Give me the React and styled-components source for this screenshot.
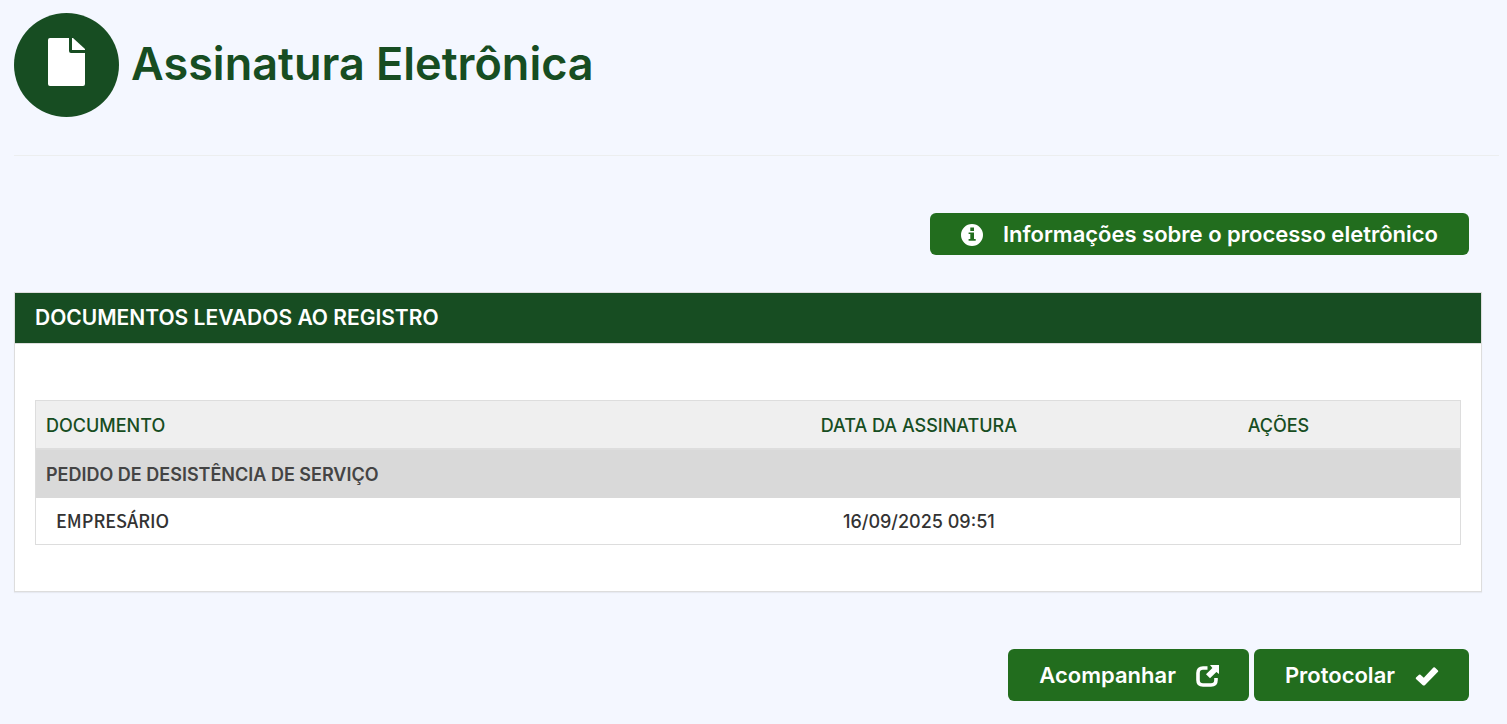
import styled, { createGlobalStyle } from 'styled-components';

const GlobalStyle = createGlobalStyle`
  * { box-sizing: border-box; }

  body {
    margin: 0;
    background: #f4f7ff;
    color: #333;
    font-family: Inter, sans-serif;
    font-size: 18px;
    font-weight: 500;
  }
`;

const Page = styled.div`
  padding: 13px 8px 23px 14px;
`;

const Header = styled.header`
  display: flex;
  align-items: center;
  gap: 12px;
  padding-bottom: 38px;
  border-bottom: 1px solid #eceeef;
`;

const Badge = styled.span`
  display: flex;
  align-items: center;
  justify-content: center;
  width: 105px;
  height: 104px;
  padding-bottom: 6px;
  border-radius: 50%;
  background: #174d22;
  color: #fff;
`;

const Title = styled.h1`
  margin: 0;
  padding-bottom: 2px;
  color: #174d22;
  font-size: 45px;
  font-weight: 600;
  line-height: 56px;
`;

const Actions = styled.div`
  display: flex;
  justify-content: flex-end;
  gap: 5px;
  margin-top: 57px;
  padding-right: 30px;
`;

const Button = styled.button`
  display: flex;
  align-items: center;
  gap: 20px;
  height: ${({ $compact }) => ($compact ? '42px' : '52px')};
  padding: 0 31px;
  border: 0;
  border-radius: 6px;
  background: #226d1e;
  color: #fff;
  font-family: inherit;
  font-size: 22px;
  font-weight: 600;
  cursor: pointer;
`;

const Icon = styled.svg`
  flex: none;
  margin-top: 2px;
  overflow: visible;
`;

const Panel = styled.section`
  margin: 37px 17px 0 0;
  border: 1px solid #ddd;
  background: #fff;
  box-shadow: 0 1px 1px rgba(0, 0, 0, 0.05);
`;

const PanelTitle = styled.h2`
  margin: 0;
  padding: 0 20px;
  border-bottom: 1px solid #ddd;
  background: #174d22;
  background-clip: padding-box;
  color: #fff;
  font-size: 21px;
  font-weight: 600;
  line-height: 50px;
`;

const PanelBody = styled.div`
  padding: 56px 20px 46px;
`;

const Table = styled.table`
  width: 100%;
  border: 1px solid #ddd;
  border-spacing: 0;
  table-layout: fixed;
`;

const Col = styled.col`
  width: ${({ $width }) => $width};
`;

const HeadCell = styled.th`
  height: 48px;
  padding: 2px 10px 0;
  border-bottom: 1px solid #ddd;
  background: #efefef;
  color: #174d22;
  font-weight: 500;
  text-align: ${({ $align }) => $align || 'center'};
`;

const GroupCell = styled.th`
  height: 49px;
  padding: 0 10px;
  border-top: 1px solid #ddd;
  background: #d9d9d9;
  color: #444;
  font-weight: 600;
  text-align: left;
`;

const Cell = styled.td`
  height: 46px;
  padding: 0 10px;
  text-align: center;
`;

const NameCell = styled(Cell)`
  padding: 0 20px 2px;
  color: #333;
  font-family: 'Noto Sans CJK SC', sans-serif;
  text-align: left;
`;

function FileIcon() {
  return (
    <svg width="37" height="48" viewBox="0 0 37 48" fill="currentColor" aria-hidden="true">
      <path d="M2 0H21V13Q21 15 23 15H37V46Q37 48 35 48H2Q0 48 0 46V2Q0 0 2 0Z" />
      <path d="M24 0H25L37 11V12H24Z" />
    </svg>
  );
}

function InfoIcon() {
  return (
    <Icon width="22" height="22" viewBox="0 0 22 22" fill="currentColor" aria-hidden="true">
      <path
        fillRule="evenodd"
        d="M11 0A11 11 0 1 1 11 22A11 11 0 1 1 11 0ZM9.3 3.6V7H13V3.6ZM7.6 8.6V10H9.3V15H7.6V16.8H14.7V15H13V8.6Z"
      />
    </Icon>
  );
}

function ShareIcon() {
  return (
    <Icon width="22" height="22" viewBox="0 0 22 22" fill="none" aria-hidden="true">
      <path
        d="M11.5 3H7Q2 3 2 8V15Q2 20 7 20H15Q20 20 20 15V13"
        stroke="currentColor"
        strokeWidth="3.6"
      />
      <path d="M14 0H23V9L20.4 7L14 13.2L10 9.2L16.4 3Z" fill="currentColor" />
    </Icon>
  );
}

function CheckIcon() {
  return (
    <Icon width="23" height="22" viewBox="0 0 23 22" fill="currentColor" aria-hidden="true">
      <path d="M1 12.6L4 9.8Q4.8 9.2 5.5 9.8L8.8 12.8L18.4 2.6Q19.2 2 19.9 2.6L23 5.4Q23.6 6.1 23 6.8L9.8 20.2Q8.8 21 7.8 20.2L1 14Q.4 13.3 1 12.6Z" />
    </Icon>
  );
}

const groups = [
  {
    title: 'PEDIDO DE DESISTÊNCIA DE SERVIÇO',
    signatures: [{ name: 'EMPRESÁRIO', date: '16/09/2025 09:51' }],
  },
];

export default function App() {
  return (
    <>
      <GlobalStyle />
      <Page>
        <Header>
          <Badge>
            <FileIcon />
          </Badge>
          <Title>Assinatura Eletrônica</Title>
        </Header>

        <Actions>
          <Button type="button" $compact>
            <InfoIcon />
            Informações sobre o processo eletrônico
          </Button>
        </Actions>

        <Panel>
          <PanelTitle>DOCUMENTOS LEVADOS AO REGISTRO</PanelTitle>
          <PanelBody>
            <Table>
              <colgroup>
                <Col $width="49.5%" />
                <Col $width="25%" />
                <Col />
              </colgroup>
              <thead>
                <tr>
                  <HeadCell scope="col" $align="left">DOCUMENTO</HeadCell>
                  <HeadCell scope="col">DATA DA ASSINATURA</HeadCell>
                  <HeadCell scope="col">AÇÕES</HeadCell>
                </tr>
              </thead>
              {groups.map((group) => (
                <tbody key={group.title}>
                  <tr>
                    <GroupCell scope="rowgroup" colSpan={3}>{group.title}</GroupCell>
                  </tr>
                  {group.signatures.map((s) => (
                    <tr key={s.name}>
                      <NameCell>{s.name}</NameCell>
                      <Cell>{s.date}</Cell>
                      <Cell />
                    </tr>
                  ))}
                </tbody>
              ))}
            </Table>
          </PanelBody>
        </Panel>

        <Actions>
          <Button type="button">
            Acompanhar
            <ShareIcon />
          </Button>
          <Button type="button">
            Protocolar
            <CheckIcon />
          </Button>
        </Actions>
      </Page>
    </>
  );
}
